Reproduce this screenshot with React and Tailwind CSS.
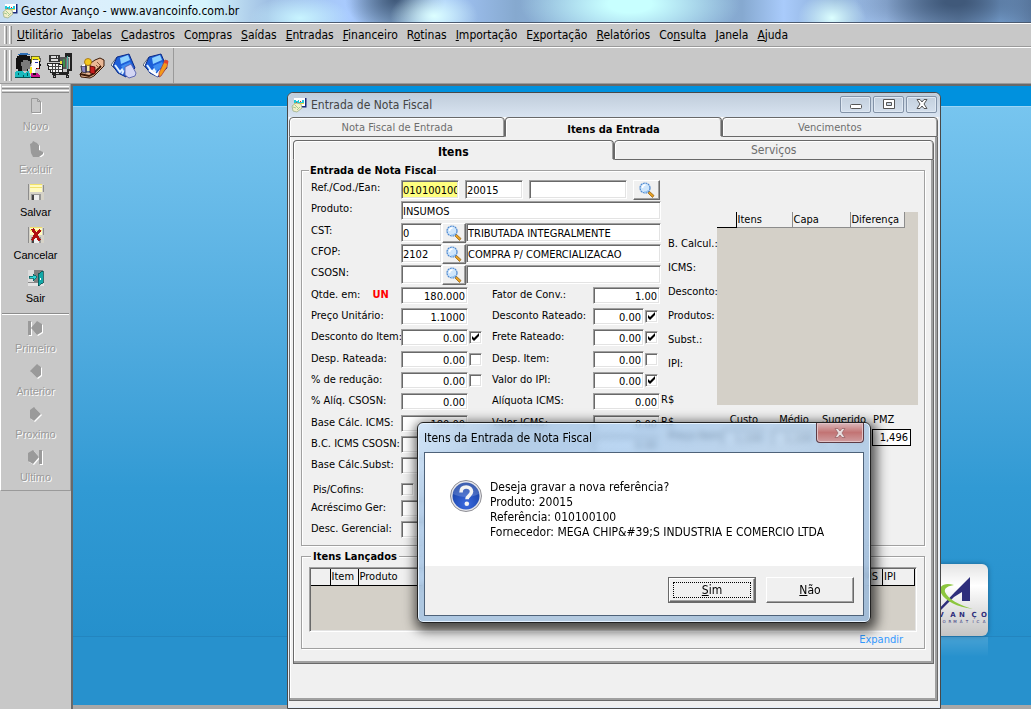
import { useState } from "react";

const menus = [
  ["", "U", "tilitário"],
  ["", "T", "abelas"],
  ["", "C", "adastros"],
  ["Co", "m", "pras"],
  ["", "S", "aídas"],
  ["", "E", "ntradas"],
  ["", "F", "inanceiro"],
  ["R", "o", "tinas"],
  ["", "I", "mportação"],
  ["E", "x", "portação"],
  ["", "R", "elatórios"],
  ["Co", "n", "sulta"],
  ["", "J", "anela"],
  ["", "A", "juda"],
];

const totals = ["B. Calcul.:", "ICMS:", "Desconto:", "Produtos:", "Subst.:", "IPI:"];

/* ---------- icons ---------- */

const AppIcon = () => (
  <svg viewBox="0 0 16 16" className="size-4 shrink-0" aria-hidden="true">
    <path d="M3 1h12v9H3z" fill="#fff" />
    <path d="M14 1h1.5v9.5H8V9h6z" fill="#1c2a7a" />
    <path d="M3 3h2v1h2V3h1v2h3V3h2v4H3z" fill="#20c8d8" />
    <path d="M3 6h10v1H3z" fill="#e8d93a" />
    <path d="M9 4h1v1H9zM5 5h1v1H5z" fill="#d22" />
    <path d="M1 9l4-3 5 1 1 4-5 4-4-1z" fill="#f3efc8" stroke="#9db08a" strokeWidth=".8" />
    <path d="M2 10l3 1M4 8l3 3M6 13l3-3" stroke="#8fbf84" strokeWidth=".8" />
  </svg>
);

const SearchIcon = () => (
  <svg viewBox="0 0 16 16" className="size-4" aria-hidden="true">
    <path d="M10 9l5 4.500-1.500 2L9 11z" fill="#e8a020" stroke="#8a5a10" strokeWidth=".7" />
    <circle cx="6" cy="6" r="5" fill="#cfe6fc" stroke="#4a86cf" strokeWidth="1.200" strokeDasharray="2 .6" />
    <path d="M3.500 6a3 3 0 0 1 3-3" stroke="#fff" strokeWidth="1.500" fill="none" />
    <path d="M9 8.500A4 4 0 0 1 5 10" stroke="#8fc0f0" strokeWidth="1.200" fill="none" />
  </svg>
);

const PeopleIcon = () => (
  <svg viewBox="0 0 26 26" className="size-[26px]" shapeRendering="crispEdges" aria-hidden="true">
    <path d="M4 1h8v2h3v3h1v6h-3v6H3v-2H1V5h1V3h2z" fill="#111" />
    <path d="M5 0h8v1h2v1H3V1h2z" fill="#2f6fb5" />
    <path d="M8 7h5v1h2v3h1v2h-1v3h-3v2H7v-5H6V9h2z" fill="#7b7b7b" />
    <path d="M16 3h8v2h1v4h-3V6h-4v3h-2z" fill="#f6ea1c" stroke="#222" strokeWidth=".6" />
    <path d="M17 7h7v4h1v2h-1v3h-4v4h-4v-7h1z" fill="#fff" />
    <path d="M24 8h1v3h1v2h-1v3h-4v-1h3z" fill="#111" />
    <path d="M20 9h3v1h-3z" fill="#23a" />
    <path d="M15 14h2v7h-2z" fill="#f6ea1c" />
    <path d="M1 18h6l3 3 2-3h2l2 7H0v-5z" fill="#19b9bd" />
    <path d="M3 20h1v2H3zM8 22h1v2H8zM12 20h1v3h-1zM0 24h15v1H0z" fill="#055" />
    <path d="M16 20h6l3 2v3h-9z" fill="#c4128c" />
    <path d="M18 20h3v2h-3zM16 24h9v1h-9z" fill="#111" />
    <path d="M22 15h2v1h-2z" fill="#d22" />
  </svg>
);

const CartIcon = () => (
  <svg viewBox="0 0 26 26" className="size-[26px]" shapeRendering="crispEdges" aria-hidden="true">
    <path d="M2 2h11v7H2z" fill="#333" />
    <path d="M4 3h5v2H4zM10 3h1v2h-1zM4 6h7v2H4z" fill="#ddd" />
    <path d="M13 4h7v12h-7z" fill="#555" />
    <path d="M13 8h2v6h-2z" fill="#e9dd3b" />
    <path d="M16 6h2v8h-2z" fill="#3a8f4b" />
    <path d="M19 5h3v11h-3z" fill="#777" />
    <path d="M0 10h12v1h3v8H3v-3H1v-4H0z" fill="#f4f4f4" stroke="#222" strokeWidth="1" />
    <path d="M2 13h12M3 16h12M5 11v8M8 11v8M11 11v8" stroke="#444" strokeWidth="1" />
    <path d="M25 1h-6v2h5v14h-3v3H6" stroke="#222" strokeWidth="1.500" fill="none" />
    <path d="M20 3v13" stroke="#48b0a0" strokeWidth="1" />
    <path d="M5 20h16v2H5zM6 22h3v3H6zM19 22h3v3h-3z" fill="#222" />
    <path d="M7 23h1v1H7zM20 23h1v1h-1zM9 20h3v1H9z" fill="#bbb" />
  </svg>
);

const HandsIcon = () => (
  <svg viewBox="0 0 26 26" className="size-[26px]" aria-hidden="true">
    <path d="M9 12l7-5 5-2 4 2v6l-4 4-6 6-4 2-9-1-1-3 3-3 3-5z" fill="#eab896" stroke="#3a1a08" strokeWidth="1" />
    <path d="M1 21l9 2 4-2 8-8" stroke="#3a1a08" strokeWidth="1.800" fill="none" />
    <path d="M2 13h5v7l-4-1zM7 11h4v8H7z" fill="#8b86c8" stroke="#222" strokeWidth=".8" />
    <circle cx="9" cy="9" r="3.500" fill="#f4c81c" stroke="#a06a08" strokeWidth=".8" />
    <path d="M8 13h3v5H8z" fill="#f7e9a0" />
    <path d="M11 13l5 1v7l-5-1z" fill="#c81e1e" stroke="#400" strokeWidth=".8" />
    <path d="M18 9l4 4M17 12l3 3" stroke="#8c5a3c" strokeWidth="1" />
    <path d="M3 12l3-1v2H3z" fill="#fff" />
  </svg>
);

const BookIcon = ({ pen }) => (
  <svg viewBox="0 0 26 26" className="size-[26px]" aria-hidden="true">
    <path d="M0 12L6 4l3 17z" fill="#fff" stroke="#345" strokeWidth=".8" />
    <path d="M6 4l12-3 3 7 3 7-9 9-8-4-5-7z" fill="#1d5fd8" stroke="#0c2a86" strokeWidth="1" />
    <path d="M9 5l8-3 2 5-9 4z" fill="#8ed2ff" />
    <path d="M4 12l5 7 6-7-4 9" stroke="#dff1ff" strokeWidth="2" fill="none" />
    <path d="M10 13l9-4 2 4-8 5z" fill="#3f8df2" />
    {pen ? (
      <>
        <path d="M6 17l8 5 4-5" stroke="#fff" strokeWidth="2.500" fill="none" />
        <path d="M22 7l3 1-1 6-6 9-2 1v-4z" fill="#f39a1b" stroke="#a44" strokeWidth=".8" />
        <path d="M22 7l3 1v3l-4-1z" fill="#e6412b" />
      </>
    ) : (
      <path d="M14 14l6-3 5 9-1 3-6 2-4-3z" fill="#d3d6f4" stroke="#5560b0" strokeWidth=".9" />
    )}
  </svg>
);

const NewIcon = () => (
  <svg viewBox="0 0 16 16" className="size-4" aria-hidden="true">
    <path d="M3.500.500h6l3 3v11h-9z" fill="none" stroke="#fff" transform="translate(1 1)" />
    <path d="M3.500.500h6l3 3v11h-9zM9.500.500v3h3" fill="#c8c8c8" stroke="#9a9a9a" />
  </svg>
);

const DeleteIcon = () => (
  <svg viewBox="0 0 16 16" className="size-4" aria-hidden="true">
    <path d="M2 3l2-1 1-2 4 2 2 2v5l4 2v2l-4 3H5l-2-4z" fill="#fff" transform="translate(1 1)" />
    <path d="M2 3l2-1 1-2 4 2 2 2v5l4 2v2l-4 3H5l-2-4z" fill="#9a9a9a" />
  </svg>
);

const SaveIcon = ({ cancel }) => (
  <svg viewBox="0 0 16 16" className="size-4" shapeRendering="crispEdges" aria-hidden="true">
    <path d="M0 0h16v16H0z" fill="#d6d3c8" />
    <path d="M2 0h12v8H2z" fill="#fffbc0" />
    <path d="M2 0h12v1H2zM2 3h12v1H2z" fill="#f2e26a" />
    <path d="M0 0h1v16H0zM15 1h1v7h-1z" fill="#8c8c8c" />
    <path d="M3 10h10v6H3z" fill="#999" />
    <path d="M6 11h5v5H6z" fill="#eee" />
    <path d="M4 11h2v5H4z" fill="#444" />
    {cancel && <path d="M3 2l3-1 2 4 3-3 2 2-3 4 3 5-3 1-2-4-3 4-2-1 3-6z" fill="#b01010" />}
  </svg>
);

const ExitIcon = () => (
  <svg viewBox="0 0 16 16" className="size-4" shapeRendering="crispEdges" aria-hidden="true">
    <path d="M0 0h6v13H0z" fill="#dcdcdc" />
    <path d="M6 0h9v12H6z" fill="#808080" />
    <path d="M0 12h16v1H0z" fill="#8a8a8a" />
    <path d="M0 13h16v3H0z" fill="#e4e4e4" />
    <path d="M10 4l5-3v12l-5 3z" fill="#12a8a8" stroke="#044" strokeWidth=".7" />
    <path d="M12 8h1v2h-1z" fill="#fff" />
    <path d="M1 6h4V4l4 3-4 4V8H1z" fill="#2ed5d5" stroke="#055" strokeWidth=".7" />
  </svg>
);

const arrows = {
  first: "M0 1h3v14H0zM3 8l6-7 5 3v8l-5 3z",
  prev: "M2 8l7-7 4 3v8l-4 3z",
  next: "M13 8L6 1 2 4v8l4 3z",
  last: "M11 1h3v14h-3zM11 8L5 1 0 4v8l5 3z",
};

const ArrowIcon = ({ dir }) => (
  <svg viewBox="0 0 16 16" className="size-4" aria-hidden="true">
    <path d={arrows[dir]} fill="#fff" transform="translate(1 1)" />
    <path d={arrows[dir]} fill="#9a9a9a" />
  </svg>
);

const QuestionIcon = () => (
  <svg viewBox="0 0 32 32" className="size-8 shrink-0" aria-hidden="true">
    <defs>
      <radialGradient id="ball" cx=".5" cy=".8" r=".8">
        <stop offset="0" stopColor="#3b6be0" />
        <stop offset="1" stopColor="#123a9c" />
      </radialGradient>
    </defs>
    <circle cx="16" cy="16" r="15.500" fill="#e6e6ea" stroke="#8f8f96" strokeWidth="1" />
    <circle cx="16" cy="16" r="13.500" fill="url(#ball)" />
    <path d="M3 14a13 13 0 0 1 26 0c-8 4-18 4-26 0z" fill="#fff" opacity=".18" />
    <path
      d="M11 12.500c0-3.500 2-5.500 5.200-5.500s5.300 1.900 5.300 4.600c0 4-4.500 4-4.500 7.600"
      fill="none"
      stroke="#f4f4f4"
      strokeWidth="3.600"
    />
    <circle cx="16.800" cy="23.800" r="2.300" fill="#f4f4f4" />
  </svg>
);

const Logo = () => (
  <svg viewBox="0 0 96 72" className="w-24" aria-label="Avanço Informática">
    <path d="M78 13v24h-8V28l-8 5-16 16h-3l20-21z" fill="#2f2f7c" />
    <path d="M62 21c-10-3-16 1-13 8 4 8 16 14 32 16-14-4-25-10-28-17-1-4 3-6 9-7z" fill="#8cc63f" />
    <g fill="#2f2f7c" fontFamily="DejaVu Sans, sans-serif" textAnchor="middle">
      <text x="38 49 61 70 82 92" y="53" fontSize="7" fontWeight="700">
        AVANÇO
      </text>
      <text x="35 41 46 52 58 63 69 75 81 86 92" y="59" fontSize="4">
        INFORMÁTICA
      </text>
    </g>
  </svg>
);

/* ---------- form pieces ---------- */

const bevel =
  "border border-t-[#a0a0a0] border-l-[#a0a0a0] border-r-white border-b-white shadow-[inset_1px_1px_0_#696969,inset_-1px_-1px_0_#e3e3e3]";
const raised =
  "flex items-center justify-center border border-t-white border-l-white border-r-[#696969] border-b-[#696969] bg-[#f0f0f0] shadow-[inset_-1px_-1px_0_#a0a0a0]";

const Field = ({ className = "", bg = "bg-white", ...props }) => (
  <input type="text" className={`${bevel} ${bg} h-[19px] min-w-0 px-px pt-0.5 leading-none ${className}`} {...props} />
);

const Num = ({ className = "", ...props }) => (
  <input
    type="text"
    className={`${bevel} h-[17px] min-w-0 bg-white pt-0.5 pr-0.5 text-right leading-none ${className}`}
    {...props}
  />
);

const Check = ({ label, checked }) => (
  <span className="relative ml-px block size-[13px]">
    <input
      type="checkbox"
      aria-label={label}
      defaultChecked={checked}
      className={`${bevel} peer block size-[13px] appearance-none bg-white`}
    />
    <svg viewBox="0 0 13 13" className="pointer-events-none absolute inset-0 hidden peer-checked:block">
      <path d="M3 5v3l2 2 5-5V2L5 7z" fill="#000" />
    </svg>
  </span>
);

const Lookup = ({ className = "" }) => (
  <button type="button" aria-label="Pesquisar" className={`${raised} h-5 ${className}`}>
    <SearchIcon />
  </button>
);

const Cell = ({ id, label, value, check, unit, width }) => (
  <>
    <label htmlFor={id} className="pt-px whitespace-nowrap">
      {label}
      {unit && <b className="ml-3 text-[#f00]">{unit}</b>}
    </label>
    <div className="flex items-center">
      <Num id={id} defaultValue={value} className={width} />
      {check !== undefined && <Check label={`${label} ativo`} checked={check} />}
    </div>
  </>
);

const Row = ({ left, right, suffix }) => (
  <div className="grid h-[21px] grid-cols-[90px_91px_101px_68px_16px] items-start">
    <Cell width="w-[67px]" {...left} />
    {right && <Cell width={right.check === undefined ? "w-[67px]" : "w-[51px]"} {...right} />}
    {suffix && <span>{suffix}</span>}
  </div>
);

const Lines = ({ children }) => <div className="pb-px">{children}</div>;

const CodeRow = ({ id, label, code, text }) => (
  <div className="flex h-[21px] items-start">
    <label htmlFor={id} className="w-[90px] pt-px">
      {label}
    </label>
    <Field id={id} defaultValue={code} className="w-[41px]" />
    <Lookup className="w-6" />
    <Field aria-label={`Descrição ${label}`} defaultValue={text} className="w-[195px]" />
  </div>
);

const Tab = ({ active, big, children }) => (
  <button
    type="button"
    role="tab"
    aria-selected={active}
    className={`flex h-5 flex-1 items-center justify-center rounded-t-[4px] border border-[#696969] bg-[#f0f0f0] shadow-[inset_1px_1px_0_#fff,inset_-1px_0_0_#a0a0a0] ${
      active ? "border-b-transparent pt-1 font-bold" : "text-[#6d6d6d]"
    } ${big ? "text-xs" : ""}`}
  >
    {children}
  </button>
);

const panel = "border border-t-0 border-[#696969] bg-[#f0f0f0] shadow-[inset_-2px_-2px_0_#a0a0a0,inset_1px_0_0_#fff]";
const group = "border border-[#a0a0a0] shadow-[inset_1px_1px_0_#fff,1px_1px_0_#fff]";

/* ---------- shell ---------- */

const Grip = () => (
  <span className="flex gap-0.5 self-stretch py-0.5">
    <span className="w-[3px] border-l border-r border-l-white border-r-[#8c8c8c]" />
    <span className="w-[3px] border-l border-r border-l-white border-r-[#8c8c8c]" />
  </span>
);

const SideButton = ({ icon, children, disabled }) => (
  <button
    type="button"
    disabled={disabled}
    className={`flex h-[43px] w-full flex-col items-center gap-1 pt-1 ${
      disabled ? "text-[#9a9a9a] [text-shadow:1px_1px_0_#fff]" : ""
    }`}
  >
    {icon}
    <span className="leading-4">{children}</span>
  </button>
);

const Sidebar = () => (
  <aside className="w-[71px] shrink-0 font-['Liberation_Sans',sans-serif]">
    <div className="border-r border-b border-l border-[#9a9a9a] border-l-white pb-0.5">
      <div className="mx-px flex flex-col gap-px pt-0.5 pb-px">
        <span className="h-[3px] border-t border-b border-t-white border-b-[#8c8c8c]" />
        <span className="h-[3px] border-t border-b border-t-white border-b-[#8c8c8c]" />
      </div>
      <SideButton icon={<NewIcon />} disabled>Novo</SideButton>
      <SideButton icon={<DeleteIcon />} disabled>Excluir</SideButton>
      <SideButton icon={<SaveIcon />}>Salvar</SideButton>
      <SideButton icon={<SaveIcon cancel />}>Cancelar</SideButton>
      <SideButton icon={<ExitIcon />}>Sair</SideButton>
      <hr className="mx-px mt-1 mb-px h-0.5 border-t border-b border-t-[#8c8c8c] border-b-white" />
      <SideButton icon={<ArrowIcon dir="first" />} disabled>Primeiro</SideButton>
      <SideButton icon={<ArrowIcon dir="prev" />} disabled>Anterior</SideButton>
      <SideButton icon={<ArrowIcon dir="next" />} disabled>Proximo</SideButton>
      <SideButton icon={<ArrowIcon dir="last" />} disabled>Ultimo</SideButton>
    </div>
  </aside>
);

const winButton =
  "flex h-[17px] w-[31px] items-center justify-center rounded-[2px] border border-[#8393a8] shadow-[inset_0_0_0_1px_#dfe8f2]";

const InvoiceForm = () => (
  <fieldset className={`${group} pr-[6px] pb-[3px] pl-[9px]`}>
    <legend className="-ml-0.5 bg-[#f0f0f0] px-px leading-[13px] font-bold">Entrada de Nota Fiscal</legend>
    <div className="flex items-start">
      <div className="w-[357px] pt-[3px]">
        <div className="flex h-[21px] items-start">
          <label htmlFor="ref" className="w-[90px] pt-px">Ref./Cod./Ean:</label>
          <Field id="ref" defaultValue="010100100" bg="bg-[#ffff80]" className="w-[58px]" />
          <Field aria-label="Código" defaultValue="20015" className="ml-1.5 w-[58px]" />
          <Field aria-label="Ean" className="ml-1.5 w-[98px]" />
          <Lookup className="ml-1.5 w-[27px]" />
        </div>
        <div className="flex h-[22px] items-start">
          <label htmlFor="produto" className="w-[90px] pt-px">Produto:</label>
          <Field id="produto" defaultValue="INSUMOS" className="w-[260px]" />
        </div>
        <Lines>
          <CodeRow id="cst" label="CST:" code="0" text="TRIBUTADA INTEGRALMENTE" />
          <CodeRow id="cfop" label="CFOP:" code="2102" text="COMPRA P/ COMERCIALIZACAO" />
          <CodeRow id="csosn" label="CSOSN:" />
        </Lines>
        <Lines>
          <Row
            left={{ id: "qtde", label: "Qtde. em:", unit: "UN", value: "180.000" }}
            right={{ id: "fator", label: "Fator de Conv.:", value: "1.00" }}
          />
          <Row
            left={{ id: "preco", label: "Preço Unitário:", value: "1.1000" }}
            right={{ id: "descr", label: "Desconto Rateado:", value: "0.00", check: true }}
          />
          <Row
            left={{ id: "desci", label: "Desconto do Item:", value: "0.00", check: true }}
            right={{ id: "frete", label: "Frete Rateado:", value: "0.00", check: true }}
          />
        </Lines>
        <Lines>
          <Row
            left={{ id: "despr", label: "Desp. Rateada:", value: "0.00", check: false }}
            right={{ id: "despi", label: "Desp. Item:", value: "0.00", check: false }}
          />
          <Row
            left={{ id: "reducao", label: "% de redução:", value: "0.00", check: false }}
            right={{ id: "vipi", label: "Valor do IPI:", value: "0.00", check: true }}
          />
          <Row
            left={{ id: "aliq", label: "% Alíq. CSOSN:", value: "0.00" }}
            right={{ id: "aicms", label: "Alíquota ICMS:", value: "0.00" }}
            suffix="R$"
          />
        </Lines>
        <Lines>
          <Row
            left={{ id: "base", label: "Base Cálc. ICMS:", value: "180.00" }}
            right={{ id: "vicms", label: "Valor ICMS:", value: "0.00" }}
            suffix="R$"
          />
          <Row
            left={{ id: "bcicms", label: "B.C. ICMS CSOSN:" }}
            right={{ id: "vcsosn", value: "0.00" }}
          />
          <Row left={{ id: "bsubst", label: "Base Cálc.Subst:" }} />
        </Lines>
        <div className="flex h-[21px] items-center">
          <span className="w-[89px] pl-0.5">Pis/Cofins:</span>
          <Check label="Pis/Cofins" />
        </div>
        <Row left={{ id: "acresc", label: "Acréscimo Ger:" }} />
        <Row left={{ id: "descg", label: "Desc. Gerencial:" }} />
      </div>

      <div className="flex-1 pt-[35px]">
        <div className="flex">
          <ul className="relative w-[49px] pt-5 leading-6 whitespace-nowrap">
            {totals.map((t) => (
              <li key={t}>{t}</li>
            ))}
          </ul>
          <div className="h-[193px] flex-1 bg-[#d4d0c8]">
            <table className="w-[188px] table-fixed border-collapse bg-[#f0f0f0] text-left">
              <thead>
                <tr className="h-[15px] leading-[13px]">
                  <th className="w-[19px] border-r border-b border-black" />
                  <th className="w-14 border-r border-b border-[#8c8c8c] pl-px font-normal">Itens</th>
                  <th className="w-[58px] border-r border-b border-[#8c8c8c] pl-px font-normal">Capa</th>
                  <th className="border-r border-b border-[#8c8c8c] pl-px font-normal">Diferença</th>
                </tr>
              </thead>
            </table>
          </div>
        </div>
        <div className="mt-2 flex items-end gap-1.5">
          <span className="w-12 leading-5 whitespace-nowrap">Preço Item:</span>
          <label className="flex w-11 flex-col items-center gap-[3px]">
            Custo
            <Num defaultValue="1,100" className="w-full" />
          </label>
          <label className="flex w-11 flex-col items-center gap-[3px]">
            Médio
            <Num defaultValue="1,100" className="w-full" />
          </label>
          <label className="flex w-11 flex-col items-center gap-[3px]">
            Sugerido
            <Num defaultValue="0,000" className="w-full" />
          </label>
          <label className="flex w-[39px] flex-col gap-[3px]">
            <span className="pl-px">PMZ</span>
            <input
              type="text"
              defaultValue="1,496"
              className="h-[17px] w-full border border-black bg-white pr-0.5 text-right leading-none"
            />
          </label>
        </div>
      </div>
    </div>
  </fieldset>
);

const InvoiceWindow = () => (
  <section className="absolute top-[6px] left-[214px] w-[654px] rounded-t-md border border-[#484848] bg-[#f0f0f0] pr-0.5 pb-[7px] pl-px shadow-[inset_0_0_0_1px_#e4eefa]">
    <header className="-mr-0.5 -ml-px flex h-6 items-center rounded-t-md bg-linear-to-b from-[#bfccda] to-[#d9e4f1] px-[3px] text-xs text-[#444]">
      <AppIcon />
      <h2 className="flex-1 pl-1">Entrada de Nota Fiscal</h2>
      <div className="flex gap-0.5 pb-0.5">
        <button type="button" aria-label="Minimizar" className={winButton}>
          <svg viewBox="0 0 12 10" className="w-3">
            <rect x=".5" y="5.500" width="11" height="4" rx="1" fill="#fff" stroke="#555" />
          </svg>
        </button>
        <button type="button" aria-label="Restaurar" className={winButton}>
          <svg viewBox="0 0 12 10" className="w-3">
            <path d="M.500.500h11v9H.500zM3.500 3.500v3h5v-3z" fill="#fff" fillRule="evenodd" stroke="#555" />
          </svg>
        </button>
        <button type="button" aria-label="Fechar" className={winButton}>
          <svg viewBox="0 0 12 10" className="w-3">
            <path d="M1 .500h3l2 2.500 2-2.500h3L8 5l3 4.500H8L6 7 4 9.500H1L4 5z" fill="#fff" stroke="#555" />
          </svg>
        </button>
      </div>
    </header>

    <div role="tablist" className="flex bg-white">
      <Tab>Nota Fiscal de Entrada</Tab>
      <Tab active>Itens da Entrada</Tab>
      <Tab>Vencimentos</Tab>
    </div>
    <div className={`${panel} px-[3px] pt-[3px] pb-[36px]`}>
      <div role="tablist" className="flex bg-white">
        <Tab active big>Itens</Tab>
        <Tab big>Serviços</Tab>
      </div>
      <div className={`${panel} pt-1 pr-2 pb-[14px] pl-[7px]`}>
        <InvoiceForm />
        <fieldset className={`${group} mt-1 pr-[7px] pl-[7px]`}>
          <legend className="ml-0.5 bg-[#f0f0f0] px-0.5 leading-[13px] font-bold">Itens Lançados</legend>
          <div className={`${bevel} mt-1 h-[65px] bg-[#d4d0c8] p-px`}>
            <table className="w-full table-fixed border-collapse bg-[#f0f0f0] text-left">
              <thead>
                <tr className="h-4 leading-[13px]">
                  <th className="w-[19px] border-r border-b border-black" />
                  <th className="w-7 border-r border-b border-black pl-px font-normal">Item</th>
                  <th className="border-b border-black pl-px font-normal">Produto</th>
                  <th className="w-9 border-r border-b border-black pr-1 text-right font-normal">ICMS</th>
                  <th className="w-8 border-r border-b border-black pl-px font-normal">IPI</th>
                </tr>
              </thead>
            </table>
          </div>
          <div className="h-4 pr-[14px] text-right leading-4">
            <a href="#expandir" className="text-[#3399ff]">Expandir</a>
          </div>
        </fieldset>
      </div>
    </div>
  </section>
);

const ConfirmDialog = ({ onClose }) => (
  <div
    role="dialog"
    aria-labelledby="dlg-title"
    className="absolute top-[422px] left-[417px] w-[454px] rounded-md border border-[#222] bg-[linear-gradient(135deg,#cfe3f8e6,#a3c2e2cc_15%,#9dc4ecb3_35%,#a8c8e8b3_60%,#9bb9d8e6)] px-1.5 pb-1.5 shadow-[inset_0_0_0_1px_#e6f3ff,2px_4px_12px_4px_rgba(0,0,0,0.65)] backdrop-blur-[3px]"
  >
    <header className="flex h-[29px] items-start justify-between">
      <h2 id="dlg-title" className="text-xs leading-[30px]">Itens da Entrada de Nota Fiscal</h2>
      <button
        type="button"
        aria-label="Fechar"
        onClick={onClose}
        className="flex h-5 w-12 items-center justify-center rounded-b-[4px] border border-t-0 border-[#5c3b45] bg-linear-to-b from-[#d9b8bc] via-[#c27474] to-[#cf9c9f] shadow-[inset_0_0_0_1px_#e3c3c6]"
      >
        <svg viewBox="0 0 12 10" className="w-3">
          <path d="M1 .500h3l2 2.500 2-2.500h3L8 5l3 4.500H8L6 7 4 9.500H1L4 5z" fill="#e8dede" stroke="#9a6668" strokeWidth=".8" />
        </svg>
      </button>
    </header>
    <div className="border border-[#4e6279] bg-[#f0f0f0]">
      <div className="flex h-[113px] gap-2 bg-white pt-[27px] pl-[25px]">
        <QuestionIcon />
        <p className="text-xs leading-[15px] whitespace-pre">
          {"Deseja gravar a nova referência?\nProduto: 20015\nReferência: 010100100\nFornecedor: MEGA CHIP&#39;S INDUSTRIA E COMERCIO LTDA"}
        </p>
      </div>
      <div className="flex h-[49px] items-start justify-end gap-2.5 pt-[11px] pr-[9px] text-xs">
        <button type="button" onClick={onClose} className="border border-[#696969]">
          <span className={`${raised} h-6 w-[86px] p-[3px]`}>
            <span className="flex size-full items-center justify-center border border-dotted border-black">
              <span><u>S</u>im</span>
            </span>
          </span>
        </button>
        <button type="button" onClick={onClose} className={`${raised} h-[26px] w-[88px]`}>
          <span><u>N</u>ão</span>
        </button>
      </div>
    </div>
  </div>
);

export default function App() {
  const [asking, setAsking] = useState(true);

  return (
    <div className="relative flex h-screen flex-col overflow-hidden bg-[#c8c8c8] font-['DejaVu_Sans_Condensed','DejaVu_Sans',sans-serif] text-[11px] leading-[13px] text-black">
      <header className="flex h-[23px] shrink-0 items-center border-b border-[#4a5a70] bg-[radial-gradient(ellipse_50px_22px_at_300px_18px,#c8f4ff,#c8f4ff00),radial-gradient(ellipse_44px_26px_at_434px_16px,#dcffff,#c8ffff00),radial-gradient(ellipse_34px_26px_at_832px_18px,#dcffff,#c8ffff00),radial-gradient(ellipse_110px_44px_at_630px_4px,#c8ffff_20%,#c8ffff00),radial-gradient(ellipse_50px_34px_at_395px_0px,#40597a,#40597a00),radial-gradient(ellipse_100px_40px_at_955px_2px,#40597a_10%,#40597a00),linear-gradient(90deg,#c4dcf2,#dceffc_8%,#d4f4fc_20%,#a0c0e4_26%,#a9cbff_34%,#86a9cf_38%,#a9cbff_42%,#86a9cf_50%,#8fb5e0_60%,#86a9d0_72%,#a9cbfb_76%,#8aabd4_81%,#a4c4f0_86%,#7090b8_93%,#8ab8ec_97%,#6080a8)] px-0.5">
        <AppIcon />
        <h1 className="pl-[3px] text-xs">Gestor Avanço - www.avancoinfo.com.br</h1>
      </header>

      <nav className="flex h-6 shrink-0 items-center border-t border-b border-t-white border-b-[#9a9a9a] pl-1">
        <Grip />
        <ul className="flex gap-[9px] pl-[5px] text-xs">
          {menus.map(([a, key, b]) => (
            <li key={a + key + b}>
              <button type="button">
                {a}
                <u>{key}</u>
                {b}
              </button>
            </li>
          ))}
        </ul>
      </nav>

      <div className="flex h-9 shrink-0 border-t border-white">
        <div className="flex items-center border-r border-[#9a9a9a] pr-1 pl-1">
          <Grip />
          <div className="flex gap-1.5 pl-[3px]">
            <button type="button" aria-label="Clientes"><PeopleIcon /></button>
            <button type="button" aria-label="Produtos"><CartIcon /></button>
            <button type="button" aria-label="Entidades"><HandsIcon /></button>
            <button type="button" aria-label="Notas"><BookIcon /></button>
            <button type="button" aria-label="Pedidos"><BookIcon pen /></button>
          </div>
        </div>
      </div>

      <div className="flex min-h-0 flex-1 border-t border-[#9a9a9a]">
        <Sidebar />
        <main className="relative flex flex-1 flex-col border-t-2 border-l-2 border-t-[#696969] border-l-[#696969]">
          <div className="h-[21px] shrink-0 border-b border-[#9bd5f5] bg-[#0091de]" />
          <div className="flex-1 bg-linear-to-b from-[#77c5ef] from-0% via-[#319ad4] via-72% to-[#2590cc]" />
          <div className="h-[69px] shrink-0 border-t border-[#2385bf] bg-[#2791cd]" />
          <div className="h-1 shrink-0 bg-[#a8a8a8]" />

          <div className="absolute top-[478px] left-[819px] h-[72px] rounded-md bg-linear-to-b from-[#e4e4e4] via-white via-30% to-[#c4c4c4] shadow-[0_0_5px_#1a5f8c]">
            <Logo />
          </div>
          <div className="absolute top-[551px] left-[819px] h-5 w-24 bg-linear-to-b from-white/15 to-transparent" />
          <InvoiceWindow />
        </main>
      </div>

      {asking && <ConfirmDialog onClose={() => setAsking(false)} />}
    </div>
  );
}
